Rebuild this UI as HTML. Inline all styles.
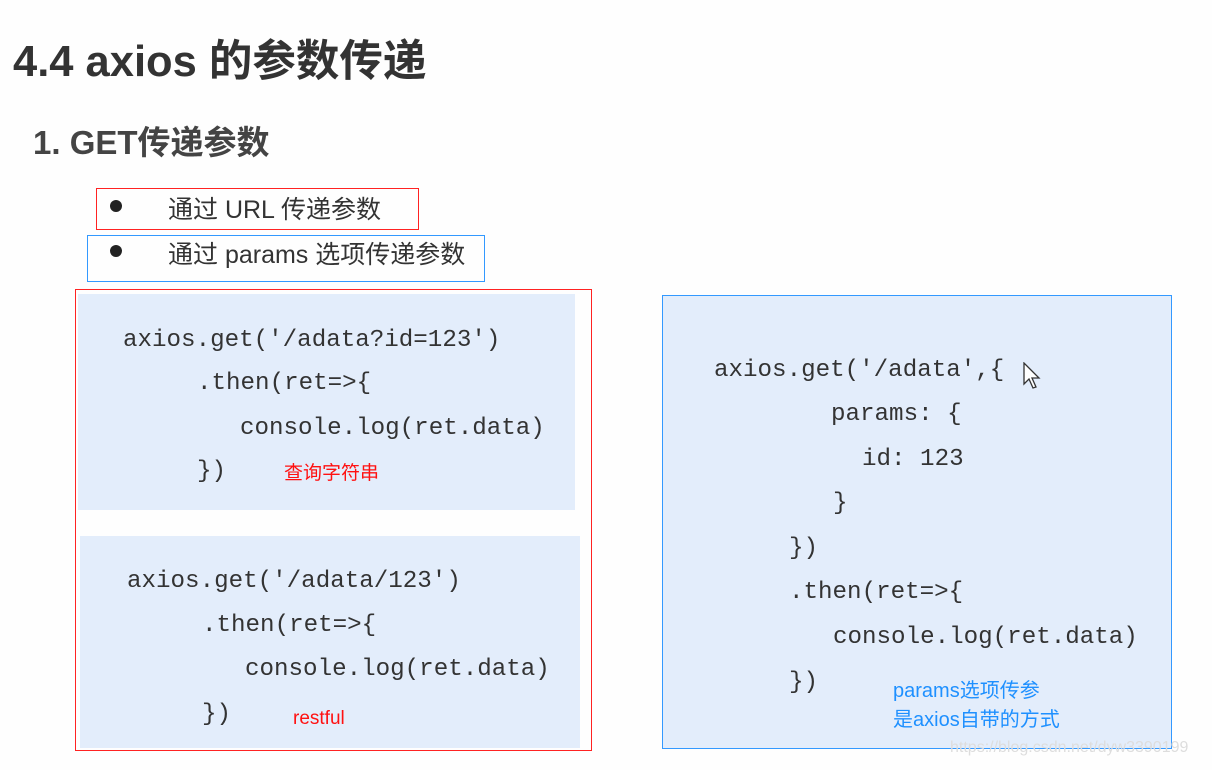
<!DOCTYPE html>
<html><head><meta charset="utf-8"><style>
body{margin:0;width:1212px;height:770px;background:#fefefe;position:relative;overflow:hidden;font-family:"Liberation Sans","Noto Sans CJK SC",sans-serif;}
.a{position:absolute;white-space:pre;}
.c{position:absolute;white-space:pre;font-family:"Liberation Mono",monospace;font-size:24.2px;color:#333;line-height:1;}
</style></head><body>
<div class="a" style="left:13px;top:26px;font-size:43.5px;font-weight:bold;color:#333;">4.4 axios 的参数传递</div>
<div class="a" style="left:33px;top:116px;font-size:33px;font-weight:bold;color:#444;">1. GET传递参数</div>
<div style="position:absolute;left:96px;top:188px;width:323px;height:42px;border:1px solid #f22;box-sizing:border-box"></div>
<div style="position:absolute;left:87px;top:235px;width:398px;height:47px;border:1.5px solid #39f;box-sizing:border-box"></div>
<div style="position:absolute;left:110px;top:200px;width:12px;height:12px;border-radius:50%;background:#222"></div>
<div style="position:absolute;left:110px;top:245px;width:12px;height:12px;border-radius:50%;background:#222"></div>
<div class="a" style="left:168px;top:190px;font-size:25px;color:#333;">通过 URL 传递参数</div>
<div class="a" style="left:168px;top:235px;font-size:25px;color:#333;">通过 params 选项传递参数</div>

<div style="position:absolute;left:78px;top:294px;width:497px;height:216px;background:#e3edfb"></div>
<div style="position:absolute;left:80px;top:536px;width:500px;height:212px;background:#e3edfb"></div>
<div style="position:absolute;left:75px;top:289px;width:517px;height:462px;border:1px solid #f22;box-sizing:border-box"></div>
<div class="c" style="left:123px;top:329px">axios.get('/adata?id=123')</div>
<div class="c" style="left:197px;top:372px">.then(ret=>{</div>
<div class="c" style="left:240px;top:417px">console.log(ret.data)</div>
<div class="c" style="left:197px;top:460px">})</div>
<div class="a" style="left:284px;top:458px;font-size:19px;color:#f11;">查询字符串</div>
<div class="c" style="left:127px;top:570px">axios.get('/adata/123')</div>
<div class="c" style="left:202px;top:614px">.then(ret=>{</div>
<div class="c" style="left:245px;top:658px">console.log(ret.data)</div>
<div class="c" style="left:202px;top:703px">})</div>
<div class="a" style="left:293px;top:708px;font-size:19px;color:#f11;">restful</div>

<div style="position:absolute;left:662px;top:295px;width:510px;height:454px;background:#e3edfb;border:1.5px solid #39f;box-sizing:border-box"></div>
<div class="c" style="left:714px;top:359px">axios.get('/adata',{</div>
<div class="c" style="left:831px;top:403px">params: {</div>
<div class="c" style="left:862px;top:448px">id: 123</div>
<div class="c" style="left:833px;top:492px">}</div>
<div class="c" style="left:789px;top:537px">})</div>
<div class="c" style="left:789px;top:581px">.then(ret=>{</div>
<div class="c" style="left:833px;top:626px">console.log(ret.data)</div>
<div class="c" style="left:789px;top:671px">})</div>
<svg style="position:absolute;left:1023px;top:362px" width="20" height="28" viewBox="0 0 20 28"><path d="M1 1 L1 22 L6 17 L10 26 L13 25 L9 16 L16 16 Z" fill="#fff" stroke="#333" stroke-width="1.3"/></svg>
<div class="a" style="left:893px;top:677px;font-size:20px;color:#1e90ff;line-height:29px;">params选项传参
是axios自带的方式</div>
<div class="a" style="left:950px;top:739px;font-size:16px;color:#ddd;">https://blog.csdn.net/dyw3390199</div>
</body></html>
